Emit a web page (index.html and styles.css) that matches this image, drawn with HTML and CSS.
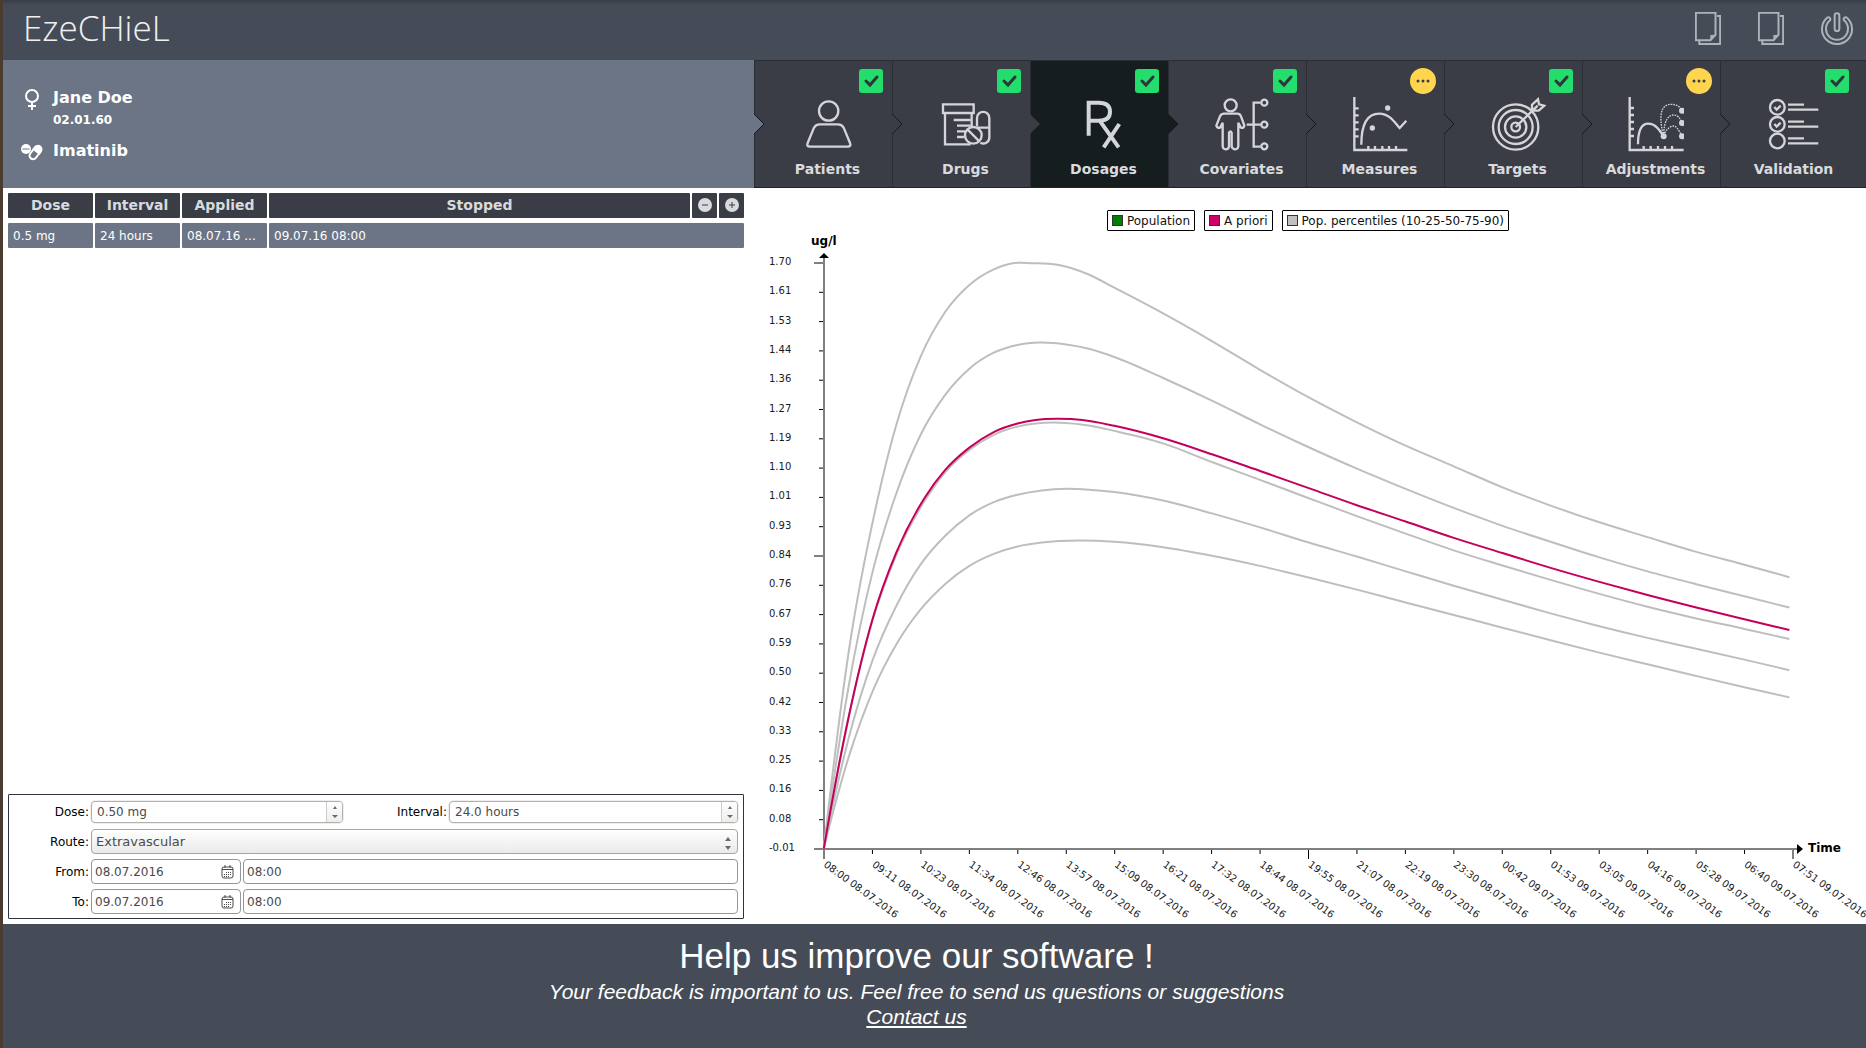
FILE: index.html
```html
<!DOCTYPE html>
<html lang="en">
<head>
<meta charset="utf-8">
<title>EzeCHieL</title>
<link rel="stylesheet" href="styles.css">
</head>
<body>
<div class="app">
  <header class="topbar">
    <h1 class="brand">EzeCHieL</h1>
    <div class="tools">
      <button class="tool" type="button" aria-label="Copy report"><svg width="26" height="33" viewBox="437 33 78 99"><path d="M439.500 35.500h59v66l-15 16h-44zM503 45h9.500v84H450v-10"/><path class="solid" d="M498 101l-15 17v-16z"/></svg></button>
      <button class="tool" type="button" aria-label="Copy data"><svg width="26" height="33" viewBox="437 33 78 99"><path d="M439.500 35.500h59v66l-15 16h-44zM503 45h9.500v84H450v-10"/><path class="solid" d="M498 101l-15 17v-16z"/></svg></button>
      <button class="tool" type="button" aria-label="Quit"><svg width="32" height="33" viewBox="812 33 96 99"><path d="M853 44a7 7 0 0 1 14 0v39a7 7 0 0 1-14 0z"/><path d="M832 49a45 45 0 1 0 56 0c-5-2-10 4-7 9a33 33 0 1 1-42 0c3-5-2-11-7-9z"/></svg></button>
    </div>
  </header>

  <div class="band">
    <section class="patient" aria-label="Current patient">
      <svg class="ico" width="22" height="22" viewBox="0 0 22 22"><circle cx="11" cy="8" r="6"/><path d="M11 14v8M7 18h8"/></svg>
      <strong class="name">Jane Doe</strong>
      <span class="birth">02.01.60</span>
      <svg class="ico drug" width="22" height="18" viewBox="0 0 22 18"><circle class="fill" cx="5" cy="5" r="5"/><path class="slot" d="M1.500 5h7"/><g transform="rotate(38 14.500 8.500)"><rect x="11" y="1" width="7" height="15" rx="3.500"/><path class="fill" d="M10 8V5a4.500 4.500 0 0 1 9 0v3z"/></g></svg>
      <strong class="name">Imatinib</strong>
    </section>

    <nav class="steps" aria-label="Steps">
      <button class="step first" type="button"><svg class="arrow" width="11" height="22" viewBox="0 0 11 22"><path d="M0 1l10 10L0 21"/></svg>
        <svg class="badge" width="24" height="24" viewBox="0 0 24 24"><rect width="24" height="24" rx="3"/><path d="M7 12l4 4 7-8"/></svg>
        <svg class="icon" viewBox="179 139 168 168"><circle cx="265" cy="184" r="29"/><path d="M238 224h55q12 0 17 10l19 46q4 11-7 11H209q-11 0-7-11l19-46q5-10 17-10z"/></svg>
        <span class="label">Patients</span></button>
      <button class="step" type="button"><svg class="arrow" width="11" height="22" viewBox="0 0 11 22"><path d="M0 1l10 10L0 21"/></svg>
        <svg class="badge" width="24" height="24" viewBox="0 0 24 24"><rect width="24" height="24" rx="3"/><path d="M7 12l4 4 7-8"/></svg>
        <svg class="icon" viewBox="594 139 168 168"><path d="M609 164h92v26h-92zM615 192v92h77M695 192v40M641 211h50M651 228h40M651 245h26M651 262h22"/><circle cx="700" cy="257" r="25"/><path d="M683 240l35 35M711 230v-25a18 18 0 0 1 37 0v59a18 18 0 0 1-27 15M711 234h37"/></svg>
        <span class="label">Drugs</span></button>
      <button class="step active" type="button" aria-current="step"><svg class="arrow" width="11" height="22" viewBox="0 0 11 22"><path d="M0 1l10 10L0 21"/></svg>
        <svg class="badge" width="24" height="24" viewBox="0 0 24 24"><rect width="24" height="24" rx="3"/><path d="M7 12l4 4 7-8"/></svg>
        <svg class="icon rx" viewBox="1008 139 168 168"><path d="M1046 258V159h30q34 0 34 27t-34 27h-30M1079 213l57 80M1138 223l-47 70"/></svg>
        <span class="label">Dosages</span></button>
      <button class="step after-active" type="button"><svg class="arrow" width="11" height="22" viewBox="0 0 11 22"><path d="M0 1l10 10L0 21"/></svg>
        <svg class="badge" width="24" height="24" viewBox="0 0 24 24"><rect width="24" height="24" rx="3"/><path d="M7 12l4 4 7-8"/></svg>
        <svg class="icon" viewBox="192 139 168 168"><circle cx="242" cy="167" r="18"/><path d="M222 192h40q8 0 11 8l10 28q-2 9-11 5l-7-14v70q-1 10-9 10t-11-8v-42q-4-8-8 0v42q-2 8-10 8t-9-10v-70l-7 14q-9 4-12-5l11-28q4-8 12-8z"/><path d="M290 225h42M332 159h-21v132h21"/><circle cx="343" cy="159" r="9"/><circle cx="343" cy="225" r="9"/><circle cx="343" cy="290" r="9"/></svg>
        <span class="label">Covariates</span></button>
      <button class="step" type="button"><svg class="arrow" width="11" height="22" viewBox="0 0 11 22"><path d="M0 1l10 10L0 21"/></svg>
        <svg class="badge wait" width="26" height="26" viewBox="0 0 26 26"><circle class="disc" cx="13" cy="13" r="13"/><circle cx="8" cy="13" r="1.500"/><circle cx="13" cy="13" r="1.500"/><circle cx="18" cy="13" r="1.500"/></svg>
        <svg class="icon" viewBox="605 139 168 168"><path d="M612 142v159h159M612 176h13M612 197h13M612 218h13M612 239h13M612 260h13M654 301v-12M674 301v-12M696 301v-12M716 301v-12M737 301v-12M633 285c0-60 18-93 54-93 30 0 46 26 61 43l20-22"/><circle class="fill" cx="712" cy="175" r="8"/><circle class="fill" cx="666" cy="235" r="8"/></svg>
        <span class="label">Measures</span></button>
      <button class="step" type="button"><svg class="arrow" width="11" height="22" viewBox="0 0 11 22"><path d="M0 1l10 10L0 21"/></svg>
        <svg class="badge" width="24" height="24" viewBox="0 0 24 24"><rect width="24" height="24" rx="3"/><path d="M7 12l4 4 7-8"/></svg>
        <svg class="icon" viewBox="1020 139 168 168"><circle cx="1097" cy="232" r="68"/><circle cx="1097" cy="232" r="51"/><circle cx="1097" cy="232" r="32"/><circle cx="1097" cy="232" r="13"/><path d="M1097 232l66-64M1146 182v-17l18-16 3 15 16 4-17 15z"/></svg>
        <span class="label">Targets</span></button>
      <button class="step" type="button"><svg class="arrow" width="11" height="22" viewBox="0 0 11 22"><path d="M0 1l10 10L0 21"/></svg>
        <svg class="badge wait" width="26" height="26" viewBox="0 0 26 26"><circle class="disc" cx="13" cy="13" r="13"/><circle cx="8" cy="13" r="1.500"/><circle cx="13" cy="13" r="1.500"/><circle cx="18" cy="13" r="1.500"/></svg>
        <svg class="icon" viewBox="233 289 168 168"><path d="M238 292v159h162M238 325h13M238 346h13M238 367h13M238 388h13M238 409h13M280 451v-12M301 451v-12M323 451v-12M344 451v-12M365 451v-12M263 434c0-40 10-62 31-62 22 0 34 20 46 38"/><path class="dots" d="M338 402c-14-60-4-88 24-88 18 0 28 8 33 18M340 402c2-40 14-56 30-56 12 0 20 10 25 24M343 400c8-14 18-21 27-21s17 16 25 30"/><circle class="fill" cx="340" cy="410" r="9"/><circle class="fill" cx="395" cy="333" r="9"/><circle class="fill" cx="395" cy="370" r="9"/><circle class="fill" cx="395" cy="410" r="9"/></svg>
        <span class="label">Adjustments</span></button>
      <button class="step" type="button"><svg class="arrow" width="11" height="22" viewBox="0 0 11 22"><path d="M0 1l10 10L0 21"/></svg>
        <svg class="badge" width="24" height="24" viewBox="0 0 24 24"><rect width="24" height="24" rx="3"/><path d="M7 12l4 4 7-8"/></svg>
        <svg class="icon" viewBox="648 289 168 168"><circle cx="682" cy="323" r="22"/><circle cx="682" cy="374" r="22"/><circle cx="682" cy="424" r="22"/><path d="M673 322l7 8 12-12M673 373l7 8 12-12M714 315h48M714 330h91M714 366h48M714 381h91M714 416h48M714 431h91"/></svg>
        <span class="label">Validation</span></button>
    </nav>
  </div>

  <main class="work">
    <section class="side">
      <table class="doses">
        <colgroup><col class="c"><col class="c"><col class="c"><col><col class="b"><col class="b"></colgroup>
        <thead><tr><th>Dose</th><th>Interval</th><th>Applied</th><th>Stopped</th>
          <th><button class="round" type="button" aria-label="Remove dosage"><svg width="14" height="14" viewBox="0 0 14 14"><circle cx="7" cy="7" r="7"/><path d="M4 7h6"/></svg></button></th>
          <th><button class="round" type="button" aria-label="Add dosage"><svg width="14" height="14" viewBox="0 0 14 14"><circle cx="7" cy="7" r="7"/><path d="M4 7h6M7 4v6"/></svg></button></th></tr></thead>
        <tbody><tr><td>0.5 mg</td><td>24 hours</td><td>08.07.16 ...</td><td colspan="3">09.07.16 08:00</td></tr></tbody>
      </table>

      <form class="editor">
        <div class="row">
          <label for="dose">Dose:</label>
          <div class="spin dose"><input id="dose" type="text" value="0.50 mg"><span class="stepper"><button type="button" aria-label="Increase dose"><svg width="6" height="4"><path d="M1 4l2-3 2 3z"/></svg></button><button type="button" aria-label="Decrease dose"><svg width="6" height="4"><path d="M0 0l3 3 3-3z"/></svg></button></span></div>
          <label class="second" for="interval">Interval:</label>
          <div class="spin grow"><input id="interval" type="text" value="24.0 hours"><span class="stepper"><button type="button" aria-label="Increase interval"><svg width="6" height="4"><path d="M1 4l2-3 2 3z"/></svg></button><button type="button" aria-label="Decrease interval"><svg width="6" height="4"><path d="M0 0l3 3 3-3z"/></svg></button></span></div>
        </div>
        <div class="row">
          <label for="route">Route:</label>
          <div class="pick"><select id="route"><option>Extravascular</option></select><svg class="mark" width="6" height="14"><path d="M0 4l3-4 3 4zM0 9l3 4 3-4z"/></svg></div>
        </div>
        <div class="row">
          <label for="from">From:</label>
          <div class="date"><input id="from" type="text" value="08.07.2016"><button type="button" aria-label="Pick start date"><svg width="13" height="14" viewBox="0 0 13 14"><rect x="1" y="2" width="11" height="11" rx="2"/><path d="M1 4.500h11M4 0v3M9 0v3"/><path class="days" d="M5 7.500h6M3 9.500h7M3 11.500h5"/></svg></button></div>
          <input class="time" type="text" value="08:00" aria-label="Start time">
        </div>
        <div class="row">
          <label for="to">To:</label>
          <div class="date"><input id="to" type="text" value="09.07.2016"><button type="button" aria-label="Pick end date"><svg width="13" height="14" viewBox="0 0 13 14"><rect x="1" y="2" width="11" height="11" rx="2"/><path d="M1 4.500h11M4 0v3M9 0v3"/><path class="days" d="M5 7.500h6M3 9.500h7M3 11.500h5"/></svg></button></div>
          <input class="time" type="text" value="08:00" aria-label="End time">
        </div>
      </form>
    </section>

    <section class="chart" aria-label="Concentration chart">
      <ul class="legend">
        <li><i class="key green"></i>Population</li>
        <li><i class="key pink"></i>A priori</li>
        <li><i class="key grey"></i>Pop. percentiles (10-25-50-75-90)</li>
      </ul>
      <svg class="plot" viewBox="0 0 1112 693">
        <g id="ticks"></g>
        <path class="axis" d="M70 24V618M60 618H1044"/>
        <path class="tip" d="M65 27l5-5 5 5zM1043 613v10l6-5z"/>
        <text class="title" x="57" y="14">ug/l</text>
        <text class="title" x="1054" y="621">Time</text>
        <svg id="curves" x="66" y="19" width="980" height="610" viewBox="0 0 1568 1568" preserveAspectRatio="none"></svg>
      </svg>
    </section>
  </main>

  <footer class="feedback">
    <h2>Help us improve our software !</h2>
    <p>Your feedback is important to us. Feel free to send us questions or suggestions</p>
    <a href="#contact">Contact us</a>
  </footer>
</div>
<script src="chart.js"></script>
</body>
</html>
```
FILE: styles.css
```css
* { box-sizing: border-box; }
body { margin: 0; background: #fff; color: #000; font: 12px/16px "DejaVu Sans", sans-serif; }
button { margin: 0; padding: 0; border: 0; background: none; color: inherit; font: inherit; }
svg { display: block; }

.app { display: flex; flex-direction: column; min-height: 100vh; border-left: 3px solid #4b3b31; }

.topbar { display: flex; align-items: center; justify-content: space-between; height: 60px; padding: 0 13px 4px 20px; background: linear-gradient(#383d47, #464c57 5px); }
.brand { margin: 0; color: #f0f0f0; font: 300 35px/44px "Open Sans", sans-serif; }
.tools { display: flex; gap: 37px; }
.tool svg { fill: none; stroke: #aeb2b8; stroke-width: 6; }
.tool .solid { fill: #aeb2b8; stroke: none; }

.band { display: grid; grid-template-columns: 751fr 1112fr; height: 128px; }
.patient { display: grid; grid-template-columns: 22px 1fr; grid-template-rows: 20px 16px 20px; gap: 4px 10px; align-content: start; padding: 28px 0 0 18px; background: #6c7585; color: #fff; }
.name { font-size: 16px; line-height: 20px; }
.birth { grid-column: 2; font-weight: bold; }
.patient .drug, .drug + .name { margin-top: 9px; }
.patient .drug { margin-top: 12px; }
.ico { fill: none; stroke: #fff; stroke-width: 2; }
.ico .fill { fill: #fff; stroke: none; }
.ico .slot { stroke: #6c7585; stroke-width: 1; }

.steps { display: flex; padding-right: 8px; background: #3a3d45; border-top: 1px solid #2a2d34; border-bottom: 1px solid #202329; }
.step { position: relative; flex: 1; display: flex; flex-direction: column; align-items: center; padding: 35px 0 0 8px; border-left: 1px solid #2a2d34; color: #d8dadd; font-weight: bold; font-size: 14px; line-height: 20px; }
.step.active { background: #151d1f; }
.label { margin-top: 7px; }
.icon { width: 56px; height: 56px; fill: none; stroke: #d3d5d9; stroke-width: 7; }
.icon.rx { stroke-width: 12; }
.icon .fill { fill: #d3d5d9; stroke: none; }
.icon .dots { stroke-width: 4; stroke-dasharray: 5 3; }
.arrow { position: absolute; left: -1px; top: 52px; fill: #3a3d45; stroke: #15181c; }
.first .arrow { fill: #6c7585; }
.active .arrow { stroke: none; }
.after-active .arrow { fill: #151d1f; }
.badge { position: absolute; top: 8px; right: 9px; fill: #23dd6d; }
.badge path { fill: none; stroke: #30353c; stroke-width: 3; stroke-linecap: round; }
.badge.wait { top: 7px; right: 8px; fill: #3a3d45; }
.badge .disc { fill: #ffd54f; }

.work { flex: 1; display: grid; grid-template-columns: 751fr 1112fr; }
.side { display: flex; flex-direction: column; justify-content: space-between; padding: 0 8px 5px 3px; }
.doses { width: 100%; table-layout: fixed; border-spacing: 2px 5px; }
.doses .c { width: 85px; }
.doses .b { width: 25px; }
.doses th { height: 25px; padding: 0 0 2px; border-radius: 1px; background: #3a3d45; color: #d8dadd; font-size: 14px; }
.doses td { height: 25px; padding: 0 5px; border-radius: 1px; background: #6c7585; color: #fff; }
.round { display: block; margin: 0 auto; }
.round svg { fill: #d8dadd; stroke: #3a3d45; }
.round circle { stroke: none; }

.editor { display: flex; flex-direction: column; gap: 5px; margin: 0 2px; padding: 4px 5px; border: 1px solid #2f3240; border-radius: 1px; }
.row { display: flex; align-items: center; height: 25px; }
.row label { width: 75px; margin-right: 2px; text-align: right; }
.row .second { width: 101px; }
.editor input, .editor select { min-width: 0; height: 100%; padding: 0 5px; border: 0; background: none; color: #4a4a4a; font: inherit; }
.spin, .pick, .date, .time { border: 1px solid #a5a5a5; border-radius: 4px; background: #fff; }
.spin { display: flex; height: 22px; border-color: #b3b0aa; box-shadow: 0 0 0 1px #f0efee; }
.spin.dose { width: 252px; }
.grow { flex: 1; }
.spin input { flex: 1; }
.stepper { display: flex; flex-direction: column; width: 16px; border-left: 1px solid #d0cdc8; border-radius: 0 3px 3px 0; background: linear-gradient(#fff, #ededec); }
.stepper button { flex: 1; display: grid; place-items: center; }
.stepper svg, .mark { fill: #6a6a6a; }
.dose { margin-right: 3px; }
.pick { position: relative; flex: 1; height: 25px; background: linear-gradient(#fff, #ebeae9); }
.editor select { width: 100%; padding: 1px 4px 0; appearance: none; font-size: 13px; }
.mark { position: absolute; right: 6px; top: 7px; pointer-events: none; }
.date { display: flex; align-items: center; width: 150px; height: 25px; margin-right: 2px; }
.date input { flex: 1; padding: 0 3px; }
.date button { margin-right: 6px; }
.date svg { fill: none; stroke: #4a4a4a; stroke-width: 1; }
.date .days { stroke-dasharray: 1 1; }
.editor .time { flex: 1; height: 25px; padding: 0 3px; border: 1px solid #a5a5a5; background: #fff; }
.date, .editor .time { border-color: #94969a; }

.chart { padding-top: 22px; overflow: hidden; }
.legend { display: flex; justify-content: center; gap: 9px; margin: 0; padding: 0 4px 0 0; list-style: none; }
.legend li { display: flex; align-items: center; gap: 4px; height: 21px; padding: 0 4px; border: 1px solid #000; border-radius: 1px; color: #111; }
.key { width: 11px; height: 11px; border: 1px solid #333; }
.green { background: #008000; }
.pink { background: #cc0066; }
.grey { background: #c0c0c0; }
.plot { width: 100%; height: auto; }
.plot text { font-size: 10px; fill: #1a1a1a; }
.plot .title { font-size: 12px; font-weight: bold; fill: #000; }
.axis { fill: none; stroke: #808080; stroke-width: 2; }
.tick { stroke: #000; stroke-width: 1; }
.curve { fill: none; stroke: #bebebe; stroke-width: 2; vector-effect: non-scaling-stroke; }
.curve.main { stroke: #c4005c; }

.feedback { min-height: 124px; padding: 12px 36px 0 0; background: #464c57; color: #fff; text-align: center; font: italic 21px/25px "Liberation Sans", Arial, sans-serif; }
.feedback h2 { margin: 0 0 3px; font: 35px/40px "Liberation Sans", Arial, sans-serif; }
.feedback p { margin: 0; }
.feedback a { color: #fff; }
```
FILE: chart.js
```js
const NS = "http://www.w3.org/2000/svg";
function add(parent, name, attrs, text) {
  const el = document.createElementNS(NS, name);
  for (const key in attrs) el.setAttribute(key, attrs[key]);
  if (text) el.textContent = text;
  parent.appendChild(el);
}

const left = 70, bottom = 618, stepX = 48.45, stepY = 29.3;
const levels = ["-0.01", "0.08", "0.16", "0.25", "0.33", "0.42", "0.50", "0.59", "0.67", "0.76", "0.84",
  "0.93", "1.01", "1.10", "1.19", "1.27", "1.36", "1.44", "1.53", "1.61", "1.70"];
const times = ["08:00 08.07.2016", "09:11 08.07.2016", "10:23 08.07.2016", "11:34 08.07.2016", "12:46 08.07.2016",
  "13:57 08.07.2016", "15:09 08.07.2016", "16:21 08.07.2016", "17:32 08.07.2016", "18:44 08.07.2016", "19:55 08.07.2016",
  "21:07 08.07.2016", "22:19 08.07.2016", "23:30 08.07.2016", "00:42 09.07.2016", "01:53 09.07.2016", "03:05 09.07.2016",
  "04:16 09.07.2016", "05:28 09.07.2016", "06:40 09.07.2016", "07:51 09.07.2016"];
const ticks = document.getElementById("ticks");
levels.forEach((label, i) => {
  const y = bottom - i * stepY;
  add(ticks, "path", { class: "tick", d: `M${i % 10 ? 65 : 60} ${y}H${left}` });
  add(ticks, "text", { x: 15, y: y + 2 }, label);
});
times.forEach((label, i) => {
  const x = left + i * stepX;
  add(ticks, "path", { class: "tick", d: `M${x} ${bottom}v${i % 10 ? 5 : 10}` });
  add(ticks, "text", { transform: `translate(${x - 1} 635) rotate(36)` }, label);
});

const tailX = [549, 627, 704, 782, 859, 937, 1014, 1092, 1169, 1247, 1324, 1402, 1479, 1551];
const series = [
  { head: [[6, 1539], [46, 1032], [92, 642], [122, 450], [161, 274], [200, 160], [239, 90], [278, 50], [308, 34], [340, 34], [380, 38], [430, 63], [471, 97]],
    tail: [163, 234, 308, 379, 443, 503, 556, 610, 657, 700, 738, 776, 809, 841] },
  { head: [[6, 1539], [46, 1120], [84, 828], [119, 640], [161, 475], [200, 373], [239, 305], [278, 264], [316, 244], [352, 238], [394, 243], [430, 254], [471, 275]],
    tail: [329, 387, 448, 507, 562, 614, 663, 709, 750, 790, 826, 859, 890, 919] },
  { head: [[6, 1539], [46, 1201], [84, 953], [122, 784], [167, 646], [200, 572], [239, 514], [278, 475], [316, 454], [345, 446], [385, 444], [430, 451], [471, 465]],
    tail: [497, 545, 591, 638, 684, 729, 772, 811, 848, 884, 917, 947, 974, 1000] },
  { head: [[6, 1539], [46, 1254], [84, 1055], [122, 915], [161, 808], [200, 735], [239, 682], [278, 648], [316, 629], [355, 618], [394, 614], [430, 616], [471, 622]],
    tail: [644, 677, 713, 752, 788, 826, 863, 899, 934, 967, 997, 1025, 1053, 1080] },
  { head: [[6, 1539], [46, 1303], [84, 1135], [122, 1014], [161, 924], [200, 859], [239, 812], [278, 781], [316, 762], [355, 752], [415, 747], [471, 750]],
    tail: [764, 786, 812, 842, 873, 906, 938, 971, 1003, 1035, 1065, 1095, 1124, 1150] },
  { main: true, head: [[6, 1539], [46, 1199], [84, 949], [122, 778], [167, 638], [200, 566], [239, 508], [278, 468], [316, 446], [345, 437], [380, 434], [420, 437], [471, 452]],
    tail: [484, 525, 568, 612, 656, 698, 740, 779, 817, 853, 887, 919, 949, 977] },
];

// Slope at point i, weighted so that unevenly spaced samples stay smooth.
function slope(p, i) {
  const rise = k => (p[k + 1][1] - p[k][1]) / (p[k + 1][0] - p[k][0]);
  if (i === 0) return rise(0) * 1.1;
  if (i === p.length - 1) return rise(i - 1);
  const before = p[i][0] - p[i - 1][0], after = p[i + 1][0] - p[i][0];
  return (rise(i - 1) * after + rise(i) * before) / (before + after);
}
function spline(p) {
  let d = `M${p[0]}`;
  for (let i = 0; i < p.length - 1; i++) {
    const [x0, y0] = p[i], [x1, y1] = p[i + 1], third = (x1 - x0) / 3;
    d += `C${x0 + third} ${y0 + slope(p, i) * third} ${x1 - third} ${y1 - slope(p, i + 1) * third} ${x1} ${y1}`;
  }
  return d;
}
for (const s of series) {
  const points = s.head.concat(s.tail.map((y, i) => [tailX[i], y]));
  add(document.getElementById("curves"), "path", { class: s.main ? "curve main" : "curve", d: spline(points) });
}
```
